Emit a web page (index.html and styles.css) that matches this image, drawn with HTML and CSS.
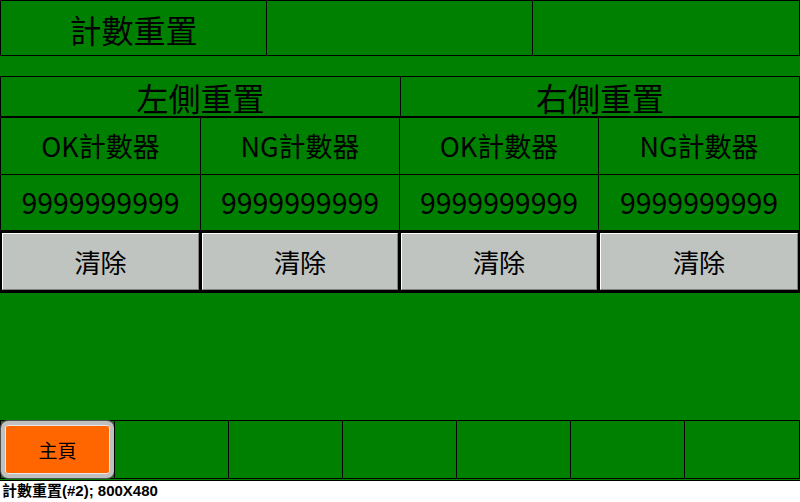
FILE: index.html
```html
<!DOCTYPE html>
<html lang="zh-Hant">
<head>
    <meta charset="UTF-8">
    <meta name="viewport" content="width=device-width, initial-scale=1.0">
    <title>計數重置</title>
    <link rel="stylesheet" href="styles.css">
</head>
<body>
    <div class="screen">
        <div class="title-bar">
            <div class="title-cell">計數重置</div>
            <div class="title-cell"></div>
            <div class="title-cell"></div>
        </div>

        <div class="reset-group">
            <div class="side-row">
                <div class="side-cell">左側重置</div>
                <div class="side-cell">右側重置</div>
            </div>
            <div class="counter-grid">
                <div class="label-cell">OK計數器</div>
                <div class="label-cell">NG計數器</div>
                <div class="label-cell">OK計數器</div>
                <div class="label-cell">NG計數器</div>

                <div class="value-cell">9999999999</div>
                <div class="value-cell">9999999999</div>
                <div class="value-cell">9999999999</div>
                <div class="value-cell">9999999999</div>

                <div class="btn-cell"><button class="clear-btn">清除</button></div>
                <div class="btn-cell"><button class="clear-btn">清除</button></div>
                <div class="btn-cell"><button class="clear-btn">清除</button></div>
                <div class="btn-cell"><button class="clear-btn">清除</button></div>
            </div>
        </div>

        <div class="nav-bar">
            <div class="nav-cell"><button class="home-btn">主頁</button></div>
            <div class="nav-cell"></div>
            <div class="nav-cell"></div>
            <div class="nav-cell"></div>
            <div class="nav-cell"></div>
            <div class="nav-cell"></div>
            <div class="nav-cell"></div>
        </div>
    </div>
    <div class="status-bar">計數重置(#2); 800X480</div>
</body>
</html>
```

FILE: styles.css
```css
body {
    margin: 0;
    padding: 0;
    background: #ffffff;
    font-family: "Noto Sans CJK TC", "Noto Sans", sans-serif;
    color: #000000;
}

.screen {
    width: 800px;
    height: 480px;
    background: #008000;
    display: flex;
    flex-direction: column;
}

/* top title row */
.title-bar {
    display: grid;
    grid-template-columns: 265px 266px 1fr;
    height: 54px;
    border: 1px solid #000;
}

.title-cell {
    display: flex;
    justify-content: center;
    align-items: center;
    font-size: 32px;
    line-height: 1;
    padding-top: 1px;
}

.title-cell + .title-cell {
    border-left: 1px solid #000;
}

/* left / right reset block */
.reset-group {
    margin-top: 20px;
}

.side-row {
    display: grid;
    grid-template-columns: 399px 1fr;
    height: 39px;
    border: 1px solid #000;
}

.side-cell {
    display: flex;
    justify-content: center;
    align-items: center;
    font-size: 32px;
    line-height: 1;
    padding-top: 0;
}

.side-cell + .side-cell {
    border-left: 1px solid #000;
}

.counter-grid {
    display: grid;
    grid-template-columns: 199px 198px 198px 1fr;
    grid-template-rows: 56px 55px 61px;
    gap: 1px;
    background: #000;
    border: 1px solid #000;
}

.label-cell,
.value-cell {
    background: #008000;
    display: flex;
    justify-content: center;
    align-items: center;
    font-size: 27px;
    line-height: 1;
}

.label-cell {
    padding-bottom: 2px;
}

.value-cell {
    font-size: 28.5px;
}

.btn-cell {
    background: #000;
    padding: 2px 1px;
    display: flex;
}

.clear-btn {
    flex: 1;
    margin: 0;
    padding: 0;
    background: #c0c4c0;
    border-top: 1px solid #ffffff;
    border-left: 1px solid #ffffff;
    border-right: 1px solid #808080;
    border-bottom: 1px solid #808080;
    font-family: "Noto Sans CJK TC", "Noto Sans", sans-serif;
    font-size: 26px;
    color: #000;
}

/* bottom navigation */
.nav-bar {
    margin-top: auto;
    margin-bottom: 1px;
    display: grid;
    grid-template-columns: 113px repeat(5, 114px) 1fr;
    height: 57px;
    border: 1px solid #000;
}

.nav-cell + .nav-cell {
    border-left: 1px solid #000;
}

.nav-cell {
    display: flex;
}

.home-btn {
    flex: 1;
    margin: 0;
    background: #ff6600;
    border: 4px solid #c0c0c0;
    border-radius: 7px;
    box-shadow: 0 0 0 1px #505050, inset 0 0 0 1px #e8e8e8;
    font-family: "Noto Sans CJK TC", "Noto Sans", sans-serif;
    font-size: 19px;
    color: #000;
}

.status-bar {
    width: 800px;
    height: 21px;
    border-top: 1px solid #000;
    font-family: "Liberation Sans", "Noto Sans CJK TC", sans-serif;
    font-weight: bold;
    font-size: 15px;
    line-height: 19px;
    padding-left: 2px;
    box-sizing: border-box;
}
```
